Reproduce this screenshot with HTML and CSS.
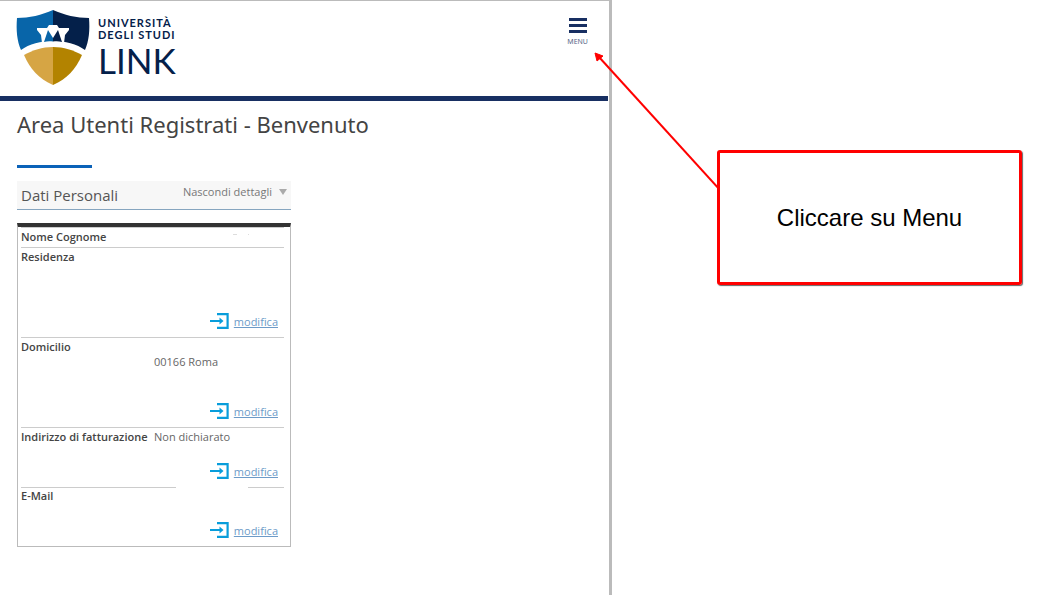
FILE: index.html
```html
<!DOCTYPE html>
<html lang="it">
<head>
  <meta charset="UTF-8">
  <meta name="viewport" content="width=device-width, initial-scale=1.0">
  <title>Area Utenti Registrati</title>
  <link rel="stylesheet" href="styles.css">
</head>
<body>
  <!-- Shared icon -->
  <svg class="defs" width="0" height="0" aria-hidden="true">
    <symbol id="icon-enter" viewBox="0 0 19 16">
      <path d="M7 1.2H17.6V14.8H7" fill="none" stroke="#089ddb" stroke-width="2.2"/>
      <path d="M0 8H12" stroke="#089ddb" stroke-width="2"/>
      <path d="M9.5 4.5L13.5 8L9.5 11.5Z" fill="#089ddb"/>
    </symbol>
  </svg>

  <div class="page">
    <!-- Site -->
    <div class="site">
      <header class="header">
        <a href="#" class="logo">
          <svg class="shield" viewBox="0 1 74 77" aria-hidden="true">
            <path d="M37 2C26 7 13 10 1 10C0 22 1 33 5 42C13 36 25 33 37 33Z" fill="#0865a9"/>
            <path d="M37 2C48 7 61 10 73 10C74 22 73 33 69 42C61 36 49 33 37 33Z" fill="#04204a"/>
            <path d="M37 39C26 39 17 42 8 47C14 61 23 71 37 77Z" fill="#d6a544"/>
            <path d="M37 39C48 39 57 42 66 47C60 61 51 71 37 77Z" fill="#b38300"/>
            <path d="M21 20H31L33 17H41L43 20H53V22L49 27L48 35H26L25 27L21 22Z" fill="#fff"/>
            <path d="M32 22L37 30V33.5C34 33 31 33 28 34Z" fill="#0865a9"/>
            <path d="M42 22L37 30V33.5C40 33 43 33 46 34Z" fill="#04204a"/>
          </svg>
          <span class="logo-text">
            <span class="logo-small">UNIVERSITÀ</span>
            <span class="logo-small">DEGLI STUDI</span>
            <span class="logo-big">LINK</span>
          </span>
        </a>
        <button type="button" class="menu-button">
          <span class="menu-line"></span>
          <span class="menu-line"></span>
          <span class="menu-line"></span>
          <span class="menu-label">MENU</span>
        </button>
      </header>

      <main class="content">
        <h1>Area Utenti Registrati - Benvenuto</h1>

        <section class="personal">
          <div class="section-head">
            <h2>Dati Personali</h2>
            <a href="#" class="toggle">Nascondi dettagli</a>
          </div>

          <table>
            <tr>
              <th scope="row">Nome Cognome</th>
              <td class="name-cell"></td>
            </tr>
            <tr class="tall">
              <th scope="row">Residenza</th>
              <td>
                <div class="value"></div>
                <a href="#" class="edit"><svg><use href="#icon-enter"/></svg><span>modifica</span></a>
              </td>
            </tr>
            <tr class="tall">
              <th scope="row">Domicilio</th>
              <td>
                <div class="value"><br>00166 Roma</div>
                <a href="#" class="edit"><svg><use href="#icon-enter"/></svg><span>modifica</span></a>
              </td>
            </tr>
            <tr>
              <th scope="row">Indirizzo di fatturazione</th>
              <td>
                <div class="value">Non dichiarato</div>
                <a href="#" class="edit"><svg><use href="#icon-enter"/></svg><span>modifica</span></a>
              </td>
            </tr>
            <tr class="email">
              <th scope="row">E-Mail</th>
              <td>
                <div class="value"></div>
                <a href="#" class="edit"><svg><use href="#icon-enter"/></svg><span>modifica</span></a>
              </td>
            </tr>
          </table>
        </section>
      </main>
    </div>

    <!-- Guide -->
    <aside class="guide">
      <div class="callout">
        Cliccare su Menu
        <svg class="arrow" viewBox="0 0 126 138" aria-hidden="true">
          <path d="M5 5L126 138" stroke="#f00" stroke-width="2"/>
          <path d="M1 1L9 4L3 9Z" fill="#f00" stroke="#f00"/>
        </svg>
      </div>
    </aside>
  </div>
</body>
</html>
```
FILE: styles.css
```css
* {
  box-sizing: border-box;
}

body {
  margin: 0;
  background-color: #fff;
  color: #444;
  font-family: "Open Sans", sans-serif;
  font-size: 11px;
  line-height: 15px;
}

h1, h2 {
  margin: 0;
  font-weight: normal;
}

.defs {
  position: absolute;
}

.page {
  display: grid;
  grid-template-columns: 612fr 446fr;
  min-height: 100vh;
}

/* Site */
.site {
  border-top: 1px solid #bbb;
  border-right: 3px solid #bbb;
}

.header {
  display: flex;
  justify-content: space-between;
  align-items: flex-start;
  height: 100px;
  margin-right: 1px;
  padding: 8px 20px 0 16px;
  border-bottom: 5px solid #182f62;
}

.logo {
  display: flex;
  gap: 8px;
  color: #04204a;
  text-decoration: none;
}

.shield {
  width: 74px;
  height: 77px;
}

.logo-text {
  display: flex;
  flex-direction: column;
  padding-top: 8px;
  font-family: Lato, sans-serif;
}

.logo-small {
  font-size: 11px;
  font-weight: bold;
  line-height: 12px;
  letter-spacing: 1px;
}

.logo-big {
  font-size: 35px;
  line-height: 38px;
}

/* Menu button */
.menu-button {
  display: flex;
  flex-direction: column;
  align-items: center;
  gap: 3px;
  padding: 9px 0 0;
  border: none;
  background: none;
  color: #5a6889;
  font-family: "Noto Sans", sans-serif;
  cursor: pointer;
}

.menu-line {
  width: 18px;
  height: 3px;
  background-color: #182f62;
}

.menu-label {
  font-size: 7px;
  line-height: 12px;
}

/* Content */
.content {
  padding: 8px 16px 24px 17px;
}

h1 {
  font-family: "Noto Sans", sans-serif;
  font-size: 22px;
  line-height: 30px;
}

h1::after {
  content: "";
  display: block;
  width: 75px;
  height: 3px;
  margin-top: 26px;
  background-color: #0b62b8;
}

.personal {
  width: 274px;
  margin-top: 13px;
}

.section-head {
  display: flex;
  justify-content: space-between;
  height: 29px;
  margin-bottom: 13px;
  padding: 0 4px;
  border-bottom: 1px solid #86a5bf;
  background-color: #f7f7f7;
}

h2 {
  color: #555;
  font-size: 15px;
  line-height: 28px;
}

.toggle {
  display: flex;
  gap: 7px;
  color: #777;
  line-height: 22px;
  text-decoration: none;
}

.toggle::after {
  content: "";
  align-self: flex-start;
  margin-top: 8px;
  border: 4px solid transparent;
  border-top: 6px solid #aaa;
  border-bottom: none;
}

/* Personal data table */
table {
  display: block;
  padding: 0 6px 0 3px;
  border: 1px solid #bbb;
  border-top: 4px solid #333;
  border-spacing: 0;
}

tbody {
  display: block;
}

tr {
  display: grid;
  grid-template-columns: 133px 1fr;
  border-top: 1px solid #ccc;
}

th, td {
  padding: 1px 0;
}

th {
  padding-bottom: 3px;
  font-weight: 600;
  text-align: left;
  white-space: nowrap;
}

td {
  color: #666;
}

/* what is left of the hidden name */
.name-cell {
  background:
    linear-gradient(#ddd, #ddd) 79px 6px / 4px 1px no-repeat,
    linear-gradient(#ddd, #ddd) 94px 6px / 1px 1px no-repeat;
}

.value {
  min-height: 27px;
}

.tall .value {
  min-height: 57px;
}

.edit {
  display: flex;
  justify-content: flex-end;
  align-items: center;
  gap: 5px;
  height: 30px;
  padding-right: 6px;
  color: #6d9bc8;
}

.edit svg {
  width: 19px;
  height: 16px;
}

/* the divider above the e-mail is open in the middle */
.email {
  border-top: none;
  background: linear-gradient(to right, #ccc 155px, transparent 155px 227px, #ccc 227px) top / 100% 1px no-repeat;
}

/* Guide */
.guide {
  padding: 150px 36px 0 105px;
}

.callout {
  position: relative;
  display: flex;
  justify-content: center;
  align-items: center;
  height: 135px;
  border: 3px solid #f00;
  border-radius: 3px;
  box-shadow: 1px 1px 1px #666;
  color: #000;
  font-family: "Liberation Sans", sans-serif;
  font-size: 24px;
  line-height: 28px;
}

.arrow {
  position: absolute;
  right: 100%;
  top: -101px;
  width: 126px;
  height: 138px;
}
```
